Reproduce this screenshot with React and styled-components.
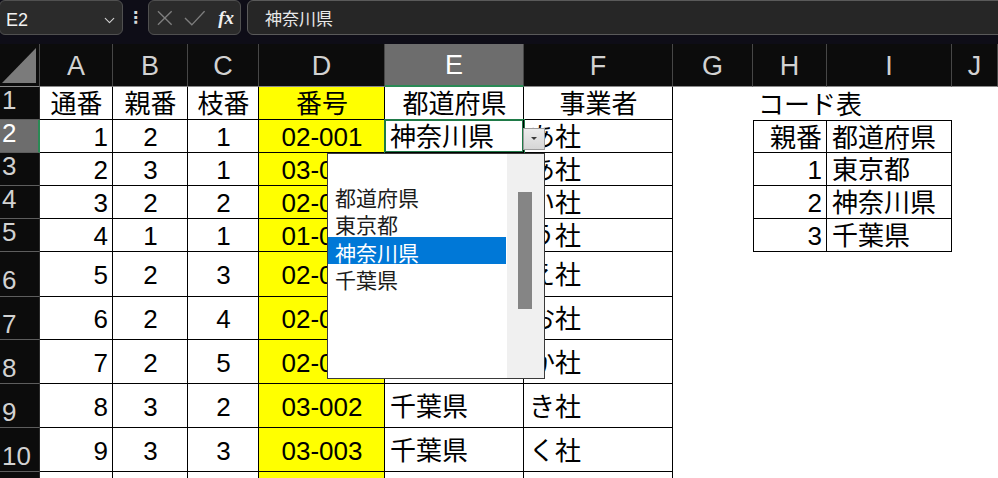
import React from 'react';
import styled, { createGlobalStyle, css } from 'styled-components';
import { ChevronDown } from 'lucide-react';

const GlobalStyle = createGlobalStyle`
  html, body {
    margin: 0;
    padding: 0;
    background: #fff;
  }
  * {
    box-sizing: border-box;
  }
`;

const CELL_FONT = '"Liberation Sans", "Noto Sans CJK JP", sans-serif';

const Page = styled.div`
  width: 998px;
  height: 478px;
  overflow: hidden;
  position: relative;
  background: #fff;
  font-family: ${CELL_FONT};
`;

/* ---------- formula bar ---------- */

const FormulaBar = styled.div`
  height: 44px;
  background: #0e0d17;
  display: flex;
  align-items: flex-start;
`;

const BarBox = styled.div`
  height: 35px;
  background: #2b2b2b;
  border: 1px solid #505050;
  border-radius: 6px;
  display: flex;
  align-items: center;
`;

const NameBox = styled(BarBox)`
  width: 124px;
  margin-left: -1px;
  justify-content: space-between;
  padding: 6px 4px 0 6px;
  color: #f2f2f2;
  font: 18px "Liberation Sans", sans-serif;
`;

const Dots = styled.div`
  width: 25px;
  text-align: center;
  color: #d8d8d8;
  font: bold 16px "DejaVu Sans", sans-serif;
  line-height: 35px;
`;

const FxBox = styled(BarBox)`
  width: 93px;
  padding: 0 6px 0 7px;
  gap: 10px;
`;

const Fx = styled.span`
  font: italic bold 19px "Liberation Serif", serif;
  color: #f0f0f0;
  margin-left: 3px;
  padding-top: 1px;
`;

const FormulaInput = styled(BarBox)`
  flex: 1;
  margin: 0 -12px 0 6px;
  background: #262626;
  border-color: #5a5a5a;
  padding-left: 17px;
  color: #e8e8e8;
  font: 17px "Noto Sans CJK JP", sans-serif;
`;

/* ---------- sheet grid ---------- */

const Sheet = styled.div`
  display: grid;
  grid-template-columns: 40px ${p => p.$cols.map(c => `${c}px`).join(' ')};
  grid-template-rows: 43px ${p => p.$rows.map(r => `${r}px`).join(' ')};
`;

const Corner = styled.div`
  background: #0c0c0c;
  border-right: 1px solid #4a4a4a;
  border-bottom: 1px solid #8a8a8a;
  display: flex;
  align-items: flex-end;
  justify-content: flex-end;
  padding: 0 3px 3px 0;
`;

const ColHeader = styled.div`
  background: ${p => (p.$selected ? '#6d6d6d' : '#0c0c0c')};
  color: ${p => (p.$selected ? '#ffffff' : '#d2d2d2')};
  border-right: 1px solid #474747;
  border-bottom: ${p => (p.$selected ? '2px solid #2a8a55' : '1px solid #8a8a8a')};
  display: flex;
  align-items: center;
  justify-content: center;
  font: 27px "Liberation Sans", sans-serif;
  padding-top: 2px;
`;

const RowHeader = styled.div`
  background: ${p => (p.$selected ? '#6d6d6d' : '#0c0c0c')};
  color: ${p => (p.$selected ? '#ffffff' : '#d2d2d2')};
  border-bottom: 1px solid #5e5e5e;
  border-right: ${p => (p.$selected ? '2px solid #2a8a55' : '1px solid #2a2a2a')};
  display: flex;
  align-items: center;
  padding-left: 2px;
  font: 26px "Liberation Sans", sans-serif;
  line-height: 1;
  ${p => (p.$tall ? css`padding-top: 12px;` : css`padding-bottom: 6px;`)}
`;

const justify = { left: 'flex-start', center: 'center', right: 'flex-end' };

const Cell = styled.div`
  position: relative;
  display: flex;
  align-items: center;
  justify-content: ${p => justify[p.$align || 'left']};
  padding: 2px 4px 0 5px;
  background: ${p => (p.$fill ? '#ffff00' : p.$border ? '#ffffff' : 'transparent')};
  color: #000;
  font-size: 26px;
  line-height: 1;
  white-space: nowrap;
  overflow: visible;
  ${p => p.$spill && css`z-index: 1;`}
  ${p => p.$border && css`
    border-right: 1px solid #000;
    border-bottom: 1px solid #000;
  `}
  ${p => p.$bl && css`border-left: 1px solid #000;`}
  ${p => p.$bt && css`border-top: 1px solid #000;`}
  ${p => p.$active && css`
    z-index: 1;
    box-shadow: 0 0 0 1px #1f7a47, inset 0 0 0 1px #1f7a47;
  `}
`;

/* ---------- validation dropdown ---------- */

const DropButton = styled.div`
  position: absolute;
  left: 523px;
  top: 128px;
  width: 22px;
  height: 22px;
  background: linear-gradient(#ececec, #d6d6d6);
  border: 1px solid #9c9c9c;
  display: flex;
  align-items: center;
  justify-content: center;
  z-index: 3;
`;

const DropList = styled.div`
  position: absolute;
  left: 327px;
  top: 153px;
  width: 218px;
  height: 226px;
  background: #fff;
  border: 1px solid #3a3a3a;
  display: flex;
  z-index: 3;
`;

const ListBody = styled.div`
  flex: 1;
  padding-top: 0;
  padding-right: 1px;
`;

const ListItem = styled.div`
  height: 27.5px;
  line-height: 26px;
  padding-left: 7px;
  font: 21px "Noto Sans CJK JP", sans-serif;
  color: ${p => (p.$selected ? '#ffffff' : '#1c1c1c')};
  background: ${p => (p.$selected ? '#0078d7' : 'transparent')};
`;

const ScrollTrack = styled.div`
  width: 37px;
  background: #f0f0f0;
  padding: 38px 0 0 11px;
`;

const ScrollThumb = styled.div`
  width: 14px;
  height: 117px;
  background: #858585;
`;

const COLS = [73, 75, 71, 126, 139, 149, 80, 74, 125, 46];
const LETTERS = ['A', 'B', 'C', 'D', 'E', 'F', 'G', 'H', 'I', 'J'];
const ROW_HEIGHTS = [33, 33, 33, 33, 33, 45, 43, 44, 44, 44, 44];
const VISIBLE_ROWS = 10;

const records = [
  [1, 2, 1, '02-001', '神奈川県', 'あ社'],
  [2, 3, 1, '03-001', '千葉県', 'あ社'],
  [3, 2, 2, '02-002', '神奈川県', 'い社'],
  [4, 1, 1, '01-001', '東京都', 'う社'],
  [5, 2, 3, '02-003', '神奈川県', 'え社'],
  [6, 2, 4, '02-004', '神奈川県', 'お社'],
  [7, 2, 5, '02-005', '神奈川県', 'か社'],
  [8, 3, 2, '03-002', '千葉県', 'き社'],
  [9, 3, 3, '03-003', '千葉県', 'く社'],
];

const codeTable = [
  ['親番', '都道府県'],
  [1, '東京都'],
  [2, '神奈川県'],
  [3, '千葉県'],
];

const dataAlign = ['right', 'center', 'center', 'center', 'left', 'left'];
const prefectures = ['', '都道府県', '東京都', '神奈川県', '千葉県'];

const CrossIcon = () => (
  <svg width="18" height="18" viewBox="0 0 18 18">
    <path d="M2 2 L16 16 M16 2 L2 16" stroke="#7e7e7e" strokeWidth="1.4" fill="none" />
  </svg>
);

const CheckIcon = () => (
  <svg width="22" height="16" viewBox="0 0 22 16">
    <path d="M1 8 L8 15 L21 1" stroke="#7e7e7e" strokeWidth="1.4" fill="none" />
  </svg>
);

const CornerTriangle = () => (
  <svg width="34" height="35" viewBox="0 0 34 35">
    <polygon points="0,35 34,35 34,0" fill="#7b7b7b" />
  </svg>
);

const DropArrow = () => (
  <svg width="10" height="8" viewBox="0 0 10 8">
    <polygon points="2,2 8,2 5,5" fill="#3a3a3a" />
  </svg>
);

function buildRow(r) {
  // r is the zero-based sheet row index (0 = row 1)
  const cells = [];
  const inTable = r <= 10;
  for (let c = 0; c < 10; c++) {
    const key = `${r}-${c}`;
    if (c <= 5) {
      let text = '';
      let align = 'center';
      if (r === 0) {
        text = ['通番', '親番', '枝番', '番号', '都道府県', '事業者'][c];
      } else if (r <= 9) {
        text = records[r - 1][c];
        align = dataAlign[c];
      }
      cells.push(
        <Cell
          key={key}
          $align={align}
          $fill={c === 3}
          $border={inTable}
          $active={r === 1 && c === 4}
        >
          {text}
        </Cell>
      );
    } else if ((c === 7 || c === 8) && r >= 1 && r <= 4) {
      const value = codeTable[r - 1][c - 7];
      cells.push(
        <Cell
          key={key}
          $align={c === 7 ? 'right' : 'left'}
          $border
          $bl={c === 7}
          $bt={r === 1}
        >
          {value}
        </Cell>
      );
    } else if (c === 7 && r === 0) {
      cells.push(<Cell key={key} $align="left" $spill>コード表</Cell>);
    } else {
      cells.push(<Cell key={key} />);
    }
  }
  return cells;
}

export default function App() {
  return (
    <Page>
      <GlobalStyle />
      <FormulaBar>
        <NameBox>
          <span>E2</span>
          <ChevronDown size={17} color="#d0d0d0" strokeWidth={1.6} />
        </NameBox>
        <Dots>⋮</Dots>
        <FxBox>
          <CrossIcon />
          <CheckIcon />
          <Fx>fx</Fx>
        </FxBox>
        <FormulaInput>神奈川県</FormulaInput>
      </FormulaBar>

      <Sheet $cols={COLS} $rows={ROW_HEIGHTS}>
        <Corner>
          <CornerTriangle />
        </Corner>
        {LETTERS.map(l => (
          <ColHeader key={l} $selected={l === 'E'}>{l}</ColHeader>
        ))}
        {ROW_HEIGHTS.map((h, r) => (
          <React.Fragment key={r}>
            <RowHeader $selected={r === 1} $tall={h > 40}>
              {r < VISIBLE_ROWS ? r + 1 : ''}
            </RowHeader>
            {buildRow(r)}
          </React.Fragment>
        ))}
      </Sheet>

      <DropButton>
        <DropArrow />
      </DropButton>
      <DropList>
        <ListBody>
          {prefectures.map((p, i) => (
            <ListItem key={i} $selected={p === '神奈川県'}>{p}</ListItem>
          ))}
        </ListBody>
        <ScrollTrack>
          <ScrollThumb />
        </ScrollTrack>
      </DropList>
    </Page>
  );
}
